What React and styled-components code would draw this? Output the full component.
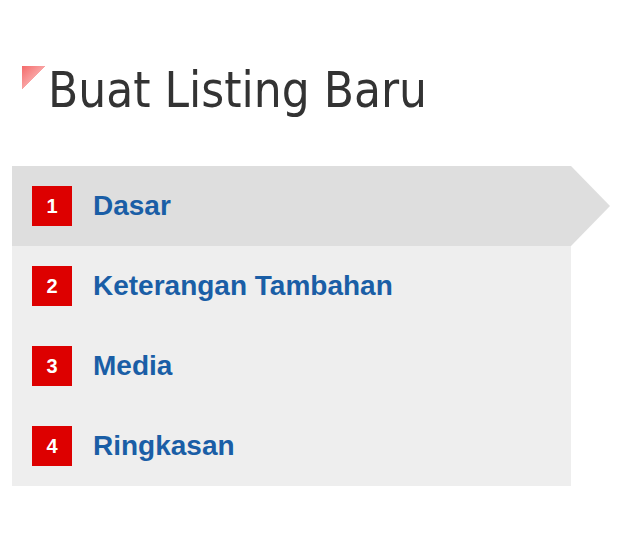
import React from "react";
import styled, { createGlobalStyle } from "styled-components";

const steps = [
  { no: 1, label: "Dasar", active: true },
  { no: 2, label: "Keterangan Tambahan" },
  { no: 3, label: "Media" },
  { no: 4, label: "Ringkasan" },
];

const App = () => {
  return (
    <>
      <GlobalStyle />
      <Page>
        <Heading>
          <Corner />
          <Title>Buat Listing Baru</Title>
        </Heading>
        <Steps>
          {steps.map((s) => (
            <Step key={s.no} active={s.active}>
              <Badge>{s.no}</Badge>
              <Label>{s.label}</Label>
            </Step>
          ))}
        </Steps>
      </Page>
    </>
  );
};

export default App;

const GlobalStyle = createGlobalStyle`
  body {
    margin: 0;
    background: #fff;
    font-family: "Liberation Sans", Arial, sans-serif;
  }
`;

const Page = styled.div`
  width: 630px;
  height: 542px;
  padding: 66px 0 0 12px;
  box-sizing: border-box;
`;

const Heading = styled.div`
  display: flex;
  align-items: flex-start;
  padding-left: 10px;
  height: 100px;
`;

const Corner = styled.div`
  width: 24px;
  height: 23px;
  flex: none;
  background: linear-gradient(135deg, #f46a6a 0%, #f9a3a3 50%, transparent 50%);
`;

const Title = styled.h1`
  margin: -1px 0 0 2px;
  font-family: "DejaVu Sans", Verdana, sans-serif;
  font-stretch: condensed;
  font-weight: normal;
  font-size: 49px;
  line-height: 52px;
  color: #333;
`;

const Steps = styled.div`
  width: 559px;
  background: #eeeeee;
  display: flex;
  flex-direction: column;
`;

const Step = styled.div`
  position: relative;
  height: 80px;
  display: flex;
  align-items: center;
  padding-left: 20px;
  gap: 21px;
  background: ${(p) => (p.active ? "#dedede" : "transparent")};

  &::after {
    content: "";
    display: ${(p) => (p.active ? "block" : "none")};
    position: absolute;
    left: 100%;
    top: 0;
    width: 0;
    height: 0;
    border-left: 39px solid #dedede;
    border-top: 40px solid transparent;
    border-bottom: 40px solid transparent;
  }
`;

const Badge = styled.span`
  width: 40px;
  height: 40px;
  flex: none;
  background: #dd0000;
  color: #fff;
  font-weight: bold;
  font-size: 20px;
  display: flex;
  align-items: center;
  justify-content: center;
`;

const Label = styled.span`
  color: #1a5ea6;
  font-weight: bold;
  font-size: 28px;
`;
